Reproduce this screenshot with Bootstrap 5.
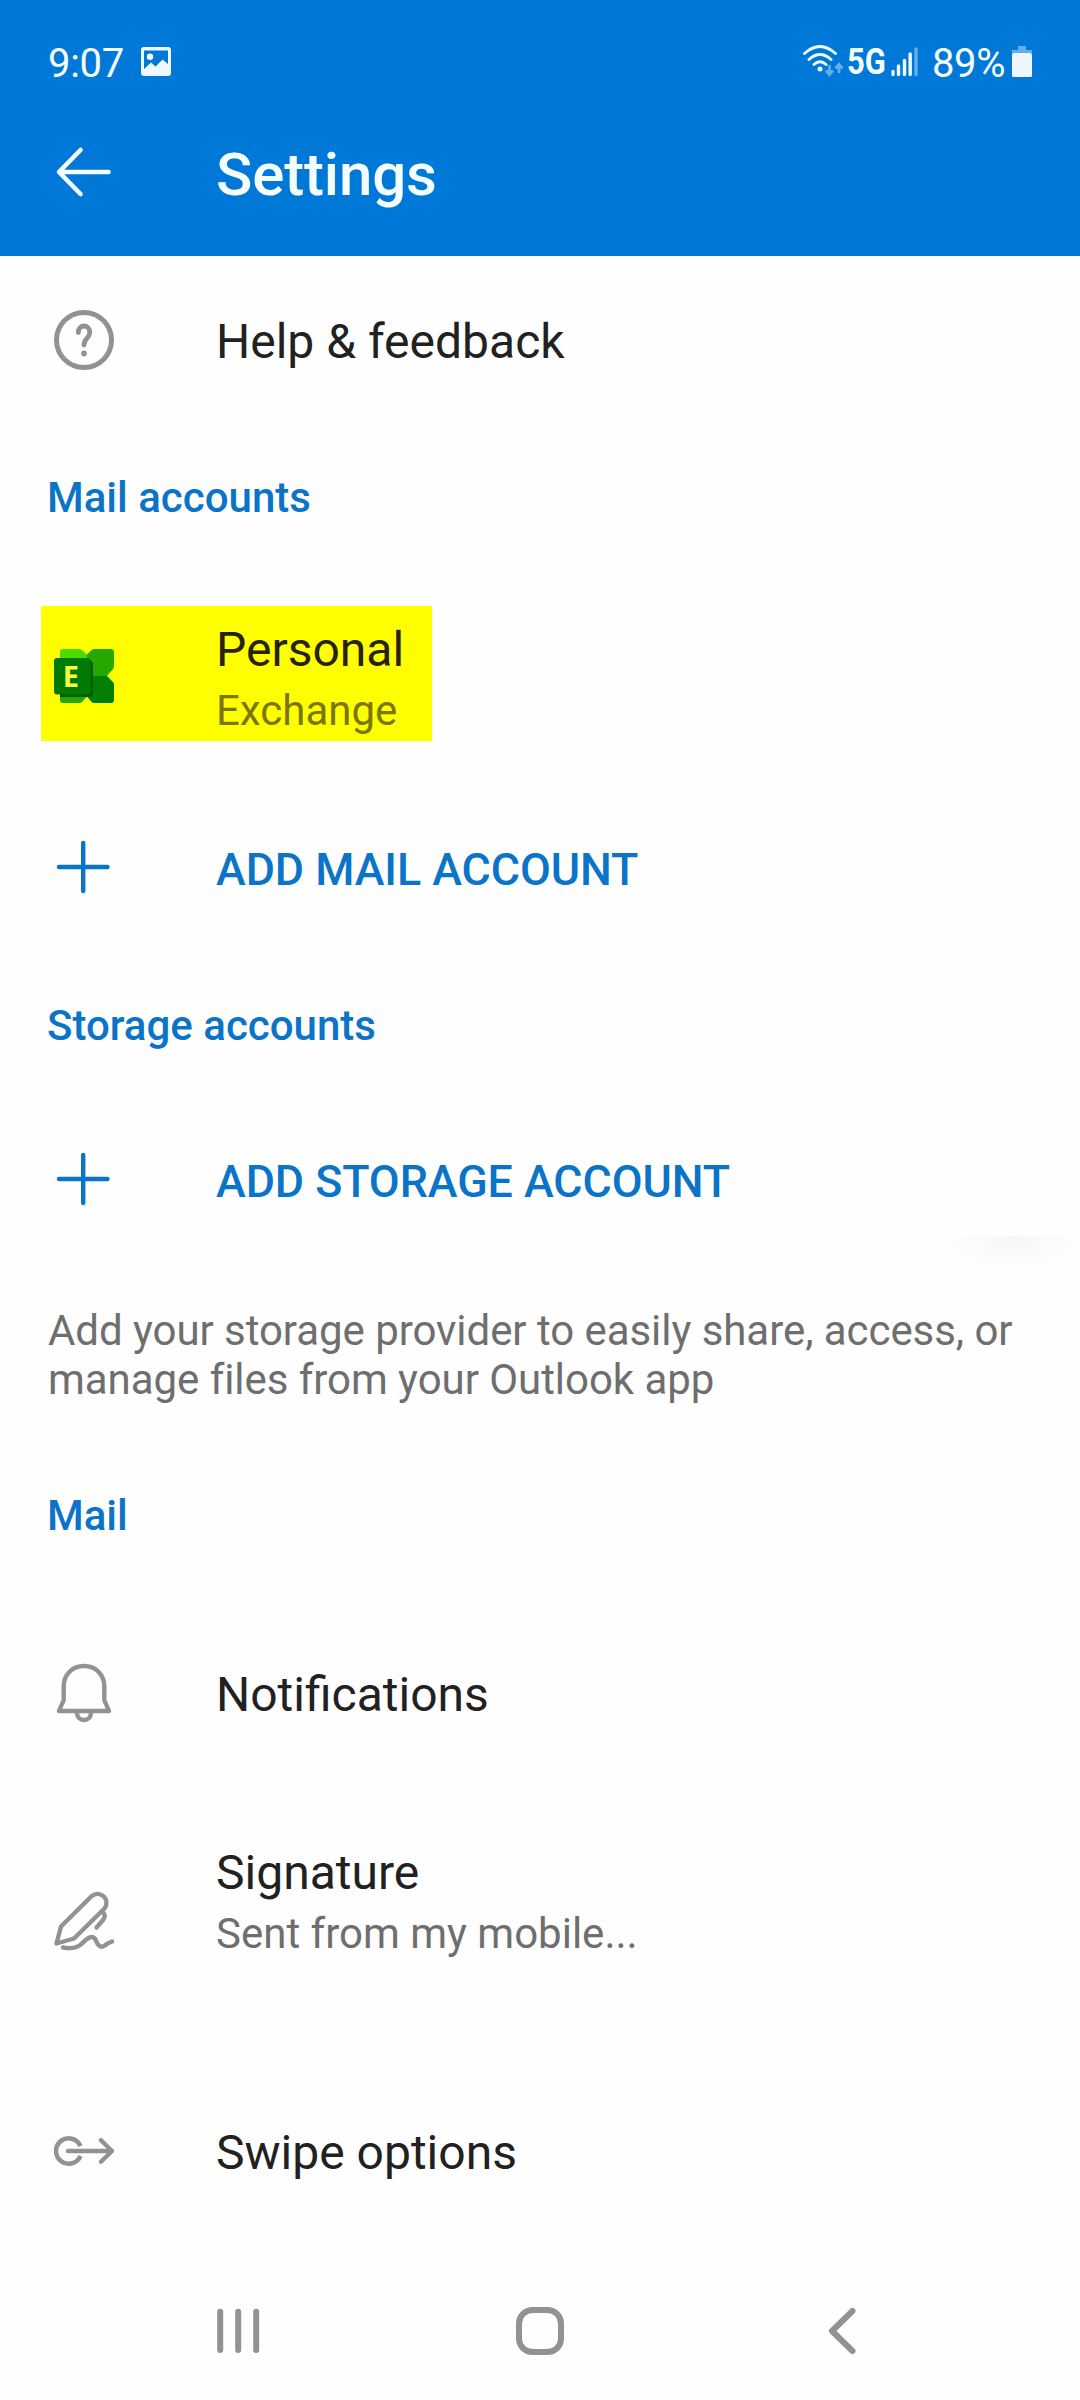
<!DOCTYPE html>
<html lang="en">
<head>
<meta charset="utf-8">
<meta name="viewport" content="width=device-width, initial-scale=1">
<title>Settings</title>
<link href="https://cdn.jsdelivr.net/npm/bootstrap@5.3.0/dist/css/bootstrap.min.css" rel="stylesheet">
<style>
body{font-family:Roboto,"Liberation Sans",sans-serif;background:#fefefe;color:#212121;width:1080px;height:2400px;overflow:hidden}
svg{display:block;flex:none}
.topbar{height:256px;background:#0078d7;color:#f4fdff}
.statusline{height:124px;padding:0 46px 0 48px}
.clock{font-size:40px;line-height:40px;padding-top:44px;width:92px;letter-spacing:-.3px}
.net5g{font-size:36px;line-height:36px;font-weight:700;width:44px;padding-top:44px}
.net5g span{display:inline-block;transform:scaleX(.86);transform-origin:0 0}
.pct{font-size:40px;line-height:40px;padding-top:44px;width:87px;letter-spacing:-.4px}
.status-ico{margin-top:44px}
.titleline{height:132px}
.lead-icon{width:216px;padding-left:54px;flex:none}
.page-title{font-size:60px;line-height:60px;font-weight:500;margin:0;padding-top:21px;letter-spacing:-.15px}
.setting-row{display:flex;align-items:center;position:relative}
.label-main{font-size:48px;line-height:60px;white-space:nowrap;padding-top:4px}
.label-sub{font-size:42px;line-height:60px;color:#6e6e6e;white-space:nowrap;padding-top:1px}
.sec-head{font-size:42px;line-height:50px;font-weight:500;color:#0a74c8;margin:0;padding:2px 0 0 47px;display:flex;align-items:center}
.act{font-size:44.8px;line-height:60px;font-weight:500;color:#0a74c8;padding-top:5px;white-space:nowrap;letter-spacing:-.05px}
.note{font-size:42px;line-height:49px;color:#6e6e6e;margin:0;padding:41px 40px 22px 48px;height:161px;white-space:nowrap;letter-spacing:-.05px}
.hl{background:#ff0;width:391px;height:135px;margin:36px 0 36px 41px;color:#262300}
.hl .lead-icon{width:175px;padding-left:13px;padding-top:40px}
.hl .label-main{padding-top:14px}
.hl .label-sub{color:#7a7600}
.sig-text{padding-bottom:35px}
.glow{position:absolute;left:935px;top:143px;width:145px;height:38px;background:radial-gradient(ellipse 76px 38px at 78px 0,#f7f7f7,#fefefe)}
.navkeys{height:158px;padding:62px 0 0 216px}
.nav-home{margin-left:252px;margin-right:260px}
.h168{height:168px}.h146{height:146px}.h180{height:180px}.h136{height:136px}.h172{height:172px}.h178{height:178px}.h278{height:278px}.h182{height:182px}
.line-ico{fill:none;stroke:#929292;stroke-width:4.4;stroke-linecap:round;stroke-linejoin:round}
.key-ico{stroke-width:6}
.plus{stroke:#0a74c8;stroke-width:4.4;stroke-linecap:round;fill:none}
</style>
</head>
<body>
<header class="topbar">
  <div class="statusline d-flex align-items-start">
    <div class="clock">9:07</div>
    <svg width="32" height="32" viewBox="0 0 32 32" style="margin-top:47px"><path fill="#eef8ff" fill-rule="evenodd" d="M4 0H28a3 3 0 0 1 3 3V26a3 3 0 0 1-3 3H4a3 3 0 0 1-3-3V3a3 3 0 0 1 3-3ZM4 3.500V22l7-6.500 4.500 4L22.500 12.500 28 17V3.500Z"/><circle cx="10" cy="9.700" r="3.200" fill="#f4fdff"/></svg>
    <div class="ms-auto d-flex">
      <svg class="status-ico" width="44" height="34" viewBox="804 44 44 34"><g fill="none" stroke="#eafcff" stroke-width="3" stroke-linecap="round"><path d="M805.500 53.500Q821 39.500 836.500 53.500M810 59.500Q821 49.500 832 59.500M815 64.500Q821 59 827 64.500"/></g><circle cx="821" cy="69" r="2.500" fill="#eafcff"/><g fill="none" stroke="#62aeee" stroke-width="2.800"><path d="M830.500 65V74M827 70.500 830.500 74.500 834 70.500M840 73V65M836.500 68.500 840 64.500 843.500 68.500"/></g></svg>
      <div class="net5g"><span>5G</span></div>
      <svg class="status-ico" width="29" height="34" viewBox="892 44 29 34"><g stroke="#eafcff" stroke-width="3.400" stroke-linecap="round"><path d="M894 71.500V74.500M899.500 66V74.500M905.500 60.500V74.500M911.200 54V74.500"/><path stroke="#62aeee" d="M917 49V74.500"/></g></svg>
      <div class="pct ms-2 ps-1">89%</div>
      <svg class="status-ico" width="24" height="34" viewBox="1010 44 24 34" style="margin-left:-5px"><path fill="#62aeee" d="M1018 46H1026V50H1032V53H1012V50H1018Z"/><rect x="1012" y="53" width="20" height="24" rx="1.500" fill="#eef6ff"/></svg>
    </div>
  </div>
  <div class="titleline d-flex align-items-start">
    <div class="lead-icon"><svg width="60" height="60" viewBox="0 0 60 60" style="margin-top:18px"><path d="M5 30H54.500M26.500 8 5 30 26.500 52" fill="none" stroke="#f4fdff" stroke-width="4.600" stroke-linecap="round" stroke-linejoin="round"/></svg></div>
    <h1 class="page-title">Settings</h1>
  </div>
</header>
<main>
  <div class="setting-row h168">
    <div class="lead-icon"><svg width="60" height="60" viewBox="0 0 60 60" class="line-ico"><circle cx="30" cy="30" r="27.500" stroke-width="5"/><path d="M24.300 22.500C24.300 13.800 35.800 13.800 35.800 22.500 35.800 28 30 28.500 30 35" stroke-width="4.800"/><circle cx="30" cy="43.500" r="2.900" fill="#929292" stroke="none"/></svg></div>
    <div class="label-main">Help &amp; feedback</div>
  </div>
  <h2 class="sec-head h146">Mail accounts</h2>
  <div class="hl d-flex">
    <div class="lead-icon"><svg width="60" height="60" viewBox="0 0 60 60">
      <path fill="#4cdb00" d="M6 30V6a3 3 0 0 1 3-3H25a4 4 0 0 1 3 1L33 8.500V30Z"/>
      <path fill="#26a800" d="M6 30H33V50.500L28 56a4 4 0 0 1-3 1H9a3 3 0 0 1-3-3Z"/>
      <path fill="#26a800" d="M33 30V8.500L37.500 4a4 4 0 0 1 3-1H57a3 3 0 0 1 3 3V20a4 4 0 0 1-1 3L53 30Z"/>
      <path fill="#007f00" d="M33 30H53L59 36a4 4 0 0 1 1 3V54a3 3 0 0 1-3 3H40.500a4 4 0 0 1-3-1L33 50.500Z"/>
      <path fill="#005c00" d="M6 14H36.500L39 17V48a3 3 0 0 1-3 3H6Z"/>
      <rect y="12" width="36.500" height="36.500" rx="3" fill="#007a00"/>
      <text x="8.700" y="41" font-family="Open Sans, sans-serif" font-weight="700" font-size="29" fill="#f8ff40">E</text></svg></div>
    <div><div class="label-main">Personal</div><div class="label-sub">Exchange</div></div>
  </div>
  <div class="setting-row h180">
    <div class="lead-icon"><svg width="60" height="60" viewBox="0 0 60 60"><path class="plus" d="M5 30H53.500M29.200 6V54"/></svg></div>
    <div class="act">ADD MAIL ACCOUNT</div>
  </div>
  <h2 class="sec-head h136">Storage accounts</h2>
  <div class="setting-row h172">
    <div class="lead-icon"><svg width="60" height="60" viewBox="0 0 60 60"><path class="plus" d="M5 30H53.500M29.200 6V54"/></svg></div>
    <div class="act">ADD STORAGE ACCOUNT</div>
    <div class="glow"></div>
  </div>
  <p class="note">Add your storage provider to easily share, access, or<br>manage files from your Outlook app</p>
  <h2 class="sec-head h178">Mail</h2>
  <div class="setting-row h178">
    <div class="lead-icon"><svg width="60" height="60" viewBox="0 0 60 60" class="line-ico"><path d="M5 48 9.700 37V23.500C9.700 11.500 18.500 3 30 3S50.300 11.500 50.300 23.500V37L55 48ZM23 49.500C23 59.500 37 59.500 37 49.500"/></svg></div>
    <div class="label-main">Notifications</div>
  </div>
  <div class="setting-row h278">
    <div class="lead-icon"><svg width="60" height="60" viewBox="0 0 60 60" class="line-ico"><path d="M2.500 52.500 7 35.500 37.500 5.200C46-1.500 57 8.500 50.500 17.500L20 47.500ZM48 20.500C51.500 23 51.500 26 49 29L42.500 36.500"/><path d="M9 56.500C17 58 23 57.500 28 52.500 34 46 39 43.500 42 49.500 44 55 47 57.500 51 54.300 53 52.500 55.500 51.500 58 50.500"/></svg></div>
    <div class="sig-text"><div class="label-main pt-0">Signature</div><div class="label-sub">Sent from my mobile...</div></div>
  </div>
  <div class="setting-row h182">
    <div class="lead-icon"><svg width="60" height="60" viewBox="0 0 60 60" class="line-ico"><path stroke-linecap="butt" stroke-width="4.500" d="M26.500 25.200A12.700 12.700 0 1 0 26.500 34.800"/><path d="M14 30H57M47 19.200 58 30 47 40.800"/></svg></div>
    <div class="label-main">Swipe options</div>
  </div>
</main>
<nav class="navkeys d-flex">
  <svg width="44" height="56" viewBox="216 2304 44 56"><path d="M220.200 2311.700V2350M238.200 2311.700V2350M256.200 2311.700V2350" class="line-ico key-ico"/></svg>
  <svg class="nav-home" width="56" height="56" viewBox="512 2304 56 56"><rect x="519" y="2310" width="42" height="42" rx="13.500" class="line-ico key-ico"/></svg>
  <svg width="30" height="56" viewBox="828 2304 30 56"><path d="M852.500 2311 832 2331 852.500 2351" class="line-ico key-ico"/></svg>
</nav>
<script src="https://cdn.jsdelivr.net/npm/bootstrap@5.3.0/dist/js/bootstrap.bundle.min.js"></script>
</body>
</html>
